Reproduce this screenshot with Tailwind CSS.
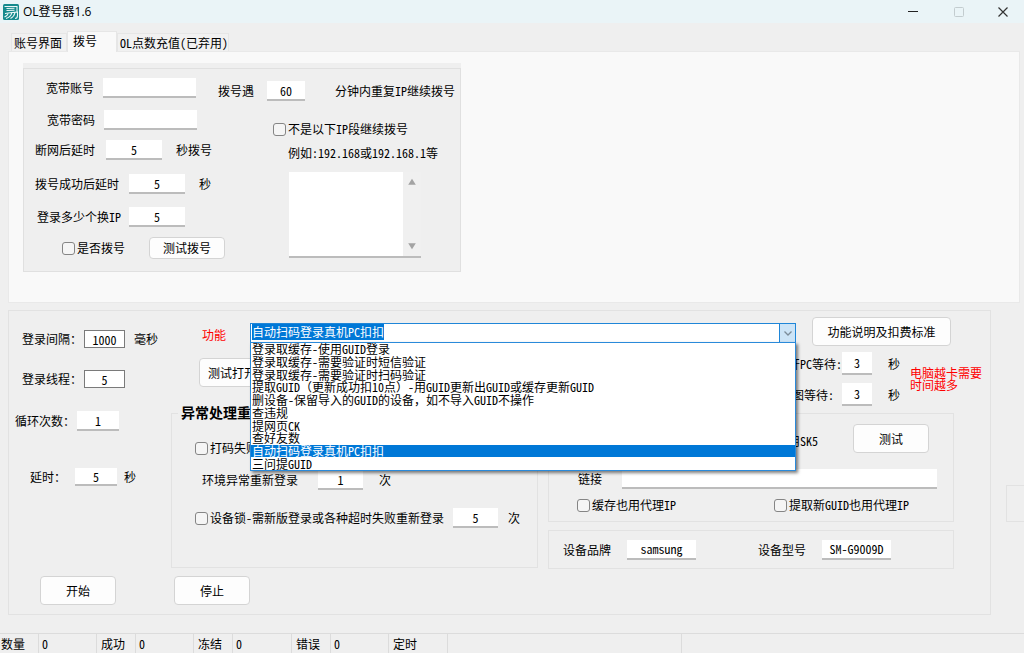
<!DOCTYPE html>
<html lang="zh-CN">
<head>
<meta charset="utf-8">
<title>OL登号器1.6</title>
<script src="https://cdn.jsdelivr.net/npm/@tailwindcss/browser@4"></script>
</head>
<body class="min-h-screen flex flex-col overflow-x-hidden bg-[#efefef] text-black text-[12px] leading-4 whitespace-nowrap font-['Noto_Sans_Mono_CJK_SC','Noto_Sans_CJK_SC',sans-serif]">

<!-- Title bar -->
<header class="h-[23px] flex items-center bg-[#eaf4f7] pl-[3px]">
  <svg class="w-4 h-4" viewBox="0 0 16 16" fill="none" aria-hidden="true">
    <rect width="16" height="16" rx="1.5" fill="#168a8d"/>
    <path d="M1.500 2.500h12.500v5M3.500 4.500l8-.3M3.500 6.500l8-.3M2 9.500C5 9 8 8.300 14.500 8v3.500c0 1.500-1 3-2.500 3M5.500 8.800C5 10.500 3.500 12 1.500 13M9 8.600c-.8 2.500-3 5-6 6M12 8.500c-.5 2.500-2.500 5-4.500 6" stroke="#eaf7f7" stroke-width="1.100"/>
  </svg>
  <h1 class="pl-1 flex-1 font-['Open_Sans','Noto_Sans_CJK_SC',sans-serif]">OL登号器1.6</h1>
  <button type="button" aria-label="最小化" class="w-[46px] h-full grid place-items-center"><svg class="w-3 h-3" viewBox="0 0 12 12"><path d="M1 5.500h10" stroke="#222" stroke-width="1"/></svg></button>
  <button type="button" aria-label="最大化" disabled class="w-[46px] h-full grid place-items-center"><svg class="w-3 h-3" viewBox="0 0 12 12"><rect x="1.500" y="1.500" width="9" height="9" rx="1" fill="none" stroke="#c3cccf"/></svg></button>
  <button type="button" aria-label="关闭" class="w-[42px] h-full grid place-items-center"><svg class="w-3 h-3" viewBox="0 0 12 12"><path d="M1.500 1.500l9 9M10.500 1.500l-9 9" stroke="#333" stroke-width="1.200"/></svg></button>
</header>

<main class="flex-1 flex flex-col pt-2">
  <!-- Tabs -->
  <div role="tablist" class="flex items-end h-5 pl-[11px]">
    <button type="button" role="tab" class="h-[18px] w-14 pl-0.5 text-left border border-b-0 border-[#e6e6e6] bg-[#f1f1f1]">账号界面</button>
    <button type="button" role="tab" aria-selected="true" class="relative z-10 h-[21px] w-[50px] -mb-px pl-[5px] pb-0.5 text-left border border-b-0 border-[#e6e6e6] bg-[#f9f9f9]">拨号</button>
    <button type="button" role="tab" class="h-[18px] w-28 pl-0.5 text-left border border-b-0 border-[#e6e6e6] bg-[#f1f1f1]">OL点数充值(已弃用)</button>
  </div>

  <section role="tabpanel" class="ml-2 mr-1 border border-[#e9e9e9] bg-[#f9f9f9] pt-[11px] pb-[30px] pl-[14px] flex">
    <div class="bg-[#efefef] pt-[5px]">
      <div class="border border-[#e0e0e0] flex w-[438px] h-[204px]">
        <div class="w-[194px] pt-[5px]">
          <div class="h-7 flex items-center pl-[22px]"><label for="acc" class="w-[57px]">宽带账号</label><input id="acc" class="w-[93px] h-5 bg-white border-b-2 border-[#bcbcbc] px-1"></div>
          <div class="h-7 mt-1 flex items-center pl-[23px]"><label for="pwd" class="w-[57px]">宽带密码</label><input id="pwd" class="w-[93px] h-5 bg-white border-b-2 border-[#bcbcbc] px-1"></div>
          <div class="h-7 mt-0.5 flex items-center pl-[11px]"><label for="d1" class="w-[71px]">断网后延时</label><input id="d1" value="5" class="w-14 h-5 bg-white border-b-2 border-[#bcbcbc] text-center"><span class="pl-[14px]">秒拨号</span></div>
          <div class="h-7 mt-1.5 flex items-center pl-[11px]"><label for="d2" class="w-[94px]">拨号成功后延时</label><input id="d2" value="5" class="w-14 h-5 bg-white border-b-2 border-[#bcbcbc] text-center"><span class="pl-[14px]">秒</span></div>
          <div class="h-7 mt-[5px] flex items-center pl-[13px]"><label for="d3" class="w-[92px]">登录多少个换IP</label><input id="d3" value="5" class="w-14 h-5 bg-white border-b-2 border-[#bcbcbc] text-center"></div>
          <div class="h-7 mt-[3px] flex items-center pl-[38px]"><input id="c1" type="checkbox" class="shrink-0 appearance-none w-[13px] h-[13px] rounded-[3px] border border-[#858585] bg-[#f5f5f5] checked:bg-[#0078d7]"><label for="c1" class="shrink-0 pl-0.5 w-[74px]">是否拨号</label><button type="button" class="shrink-0 w-[76px] h-[22px] rounded-[4px] border border-[#d4d4d4] bg-[#fdfdfd]">测试拨号</button></div>
        </div>
        <div class="pt-2">
          <div class="h-7 flex items-center"><label for="ipm" class="w-[49px]">拨号遇</label><input id="ipm" value="60" class="w-[38px] h-5 bg-white border-b-2 border-[#bcbcbc] text-center"><span class="pl-[30px]">分钟内重复IP继续拨号</span></div>
          <div class="h-6 mt-3 flex items-center pl-[55px]"><input id="c2" type="checkbox" class="appearance-none w-[13px] h-[13px] rounded-[3px] border border-[#858585] bg-[#f5f5f5] checked:bg-[#0078d7]"><label for="c2" class="pl-0.5">不是以下IP段继续拨号</label></div>
          <div class="h-6 flex items-center pl-[70px]"><label for="seg">例如:192.168或192.168.1等</label></div>
          <div class="mt-[7px] ml-[71px] w-[132px] h-[86px] flex border-b-2 border-[#bcbcbc] bg-white">
            <textarea id="seg" class="flex-1 min-w-0 resize-none overflow-hidden bg-white"></textarea>
            <div class="w-[18px] flex flex-col justify-between items-center bg-[#f0f0f0] py-1.5">
              <button type="button" aria-label="向上滚动" class="flex"><svg class="w-2 h-2" viewBox="0 0 8 8"><path d="M4 .8L7.800 6.800H.2z" fill="#a3a3a3"/></svg></button>
              <button type="button" aria-label="向下滚动" class="flex"><svg class="w-2 h-2" viewBox="0 0 8 8"><path d="M4 7.200L.2 1.200h7.600z" fill="#a3a3a3"/></svg></button>
            </div>
          </div>
        </div>
      </div>
    </div>
  </section>

  <div class="mt-[7px] ml-2 flex">
    <section class="flex-1 border border-[#e2e2e2] h-[305px] flex flex-col">
      <div class="flex">
        <!-- Timing settings -->
        <div class="w-[162px] pt-[14px]">
          <div class="h-7 flex items-center pl-[13px]"><label for="t1" class="w-[62px]">登录间隔：</label><input id="t1" value="1000" class="w-[41px] h-[18px] bg-white border border-[#7a7a7a] text-center"><span class="pl-[9px]">毫秒</span></div>
          <div class="h-7 mt-3 flex items-center pl-[13px]"><label for="t2" class="w-[62px]">登录线程：</label><input id="t2" value="5" class="w-[41px] h-[18px] bg-white border border-[#7a7a7a] text-center"></div>
          <div class="h-7 mt-[14px] flex items-center pl-[6px]"><label for="t3" class="w-[62px]">循环次数：</label><input id="t3" value="1" class="w-[42px] h-5 bg-white border-b-2 border-[#bcbcbc] text-center"></div>
          <div class="h-7 mt-7 flex items-center pl-[21px]"><label for="t4" class="w-[45px]">延时：</label><input id="t4" value="5" class="w-[42px] h-[18px] bg-white border-b-2 border-[#bcbcbc] text-center"><span class="pl-[7px]">秒</span></div>
        </div>

        <div class="flex-1 pr-9">
          <!-- Function selector -->
          <div class="flex items-start pt-[6px] pl-[31px]">
            <label for="fn" class="w-12 pt-2.5 text-[#ff0000]">功能</label>
            <div class="relative z-20 flex-1 mt-[6px]">
              <div class="flex h-5 border border-[#1f86d8] bg-white">
                <input id="fn" role="combobox" aria-expanded="true" aria-controls="fnlist" value="自动扫码登录真机PC扣扣" class="flex-1 min-w-0 h-4 pl-px outline-none bg-white selection:bg-[#0078d7] selection:text-white">
                <button type="button" aria-label="展开列表" class="w-4 border-l border-[#1f86d8] bg-[#cce4f7] grid place-items-center"><svg class="w-2.5 h-2.5" viewBox="0 0 10 10"><path d="M1.500 3.500L5 7l3.500-3.500" fill="none" stroke="#7c8c99" stroke-width="1.300"/></svg></button>
              </div>
              <ul id="fnlist" role="listbox" aria-label="功能" class="absolute left-0 right-0 top-[19px] h-[129px] flex flex-col border border-[#2a8ada] bg-white shadow-[2px_2px_3px_rgba(0,0,0,0.5)]">
                <li role="option" class="flex-1 flex items-center leading-[10px] pl-px">登录取缓存-使用GUID登录</li>
                <li role="option" class="flex-1 flex items-center leading-[10px] pl-px">登录取缓存-需要验证时短信验证</li>
                <li role="option" class="flex-1 flex items-center leading-[10px] pl-px">登录取缓存-需要验证时扫码验证</li>
                <li role="option" class="flex-1 flex items-center leading-[10px] pl-px">提取GUID（更新成功扣10点）-用GUID更新出GUID或缓存更新GUID</li>
                <li role="option" class="flex-1 flex items-center leading-[10px] pl-px">删设备-保留导入的GUID的设备，如不导入GUID不操作</li>
                <li role="option" class="flex-1 flex items-center leading-[10px] pl-px">查违规</li>
                <li role="option" class="flex-1 flex items-center leading-[10px] pl-px">提网页CK</li>
                <li role="option" class="flex-1 flex items-center leading-[10px] pl-px">查好友数</li>
                <li role="option" aria-selected="true" class="flex-1 flex items-center leading-[10px] pl-px bg-[#0078d7] text-white">自动扫码登录真机PC扣扣</li>
                <li role="option" class="flex-1 flex items-center leading-[10px] pl-px">三问提GUID</li>
              </ul>
            </div>
            <button type="button" class="ml-4 mr-[3px] w-[139px] h-[29px] rounded-[4px] border border-[#d4d4d4] bg-[#fdfdfd]">功能说明及扣费标准</button>
          </div>

          <div class="flex justify-between pl-7 pt-0.5 -mr-7">
            <button type="button" class="mt-[10px] w-[78px] h-[29px] rounded-[4px] border border-[#d4d4d4] bg-[#fdfdfd]">测试打开PC</button>
            <div class="flex items-center">
              <div>
                <div class="h-[31px] flex items-center"><label for="w1" class="w-[72px] text-right">打开PC等待:</label><input id="w1" value="3" class="w-[30px] h-[23px] bg-white border-b-2 border-[#bcbcbc] text-center"><span class="w-[38px] pl-4">秒</span></div>
                <div class="h-[31px] flex items-center"><label for="w2" class="w-[72px] pr-2 text-right">截图等待:</label><input id="w2" value="3" class="w-[30px] h-[23px] bg-white border-b-2 border-[#bcbcbc] text-center"><span class="w-[38px] pl-4">秒</span></div>
              </div>
              <p class="leading-3 text-[#ff0000]">电脑越卡需要<br>时间越多</p>
            </div>
          </div>

          <div class="flex gap-[10px] -mt-1.5">
            <fieldset class="w-[367px] h-[164px] flex flex-col border border-[#e2e2e2] min-w-0">
              <legend class="ml-1.5 px-[3px] h-[18px] text-[14px] leading-4 font-bold">异常处理重新登录</legend>
              <div class="h-7 mt-3 flex items-center pl-[23px]"><input id="c3" type="checkbox" class="appearance-none w-[13px] h-[13px] rounded-[3px] border border-[#858585] bg-[#f5f5f5] checked:bg-[#0078d7]"><label for="c3" class="pl-0.5">打码失败重新登录</label></div>
              <div class="h-7 mt-1 flex items-center pl-[30px]"><label for="n1" class="w-[116px]">环境异常重新登录</label><input id="n1" value="1" class="w-[45px] h-5 bg-white border-b-2 border-[#bcbcbc] text-center"><span class="pl-4">次</span></div>
              <div class="h-7 mt-[10px] flex items-center pl-[23px]"><input id="c4" type="checkbox" class="appearance-none w-[13px] h-[13px] rounded-[3px] border border-[#858585] bg-[#f5f5f5] checked:bg-[#0078d7]"><label for="c4" class="pl-0.5 w-[245px]">设备锁-需新版登录或各种超时失败重新登录</label><input aria-label="设备锁重新登录次数" value="5" class="w-[45px] h-5 bg-white border-b-2 border-[#bcbcbc] text-center"><span class="pl-[10px]">次</span></div>
            </fieldset>

            <div class="flex-1 pt-[9px]">
              <div class="h-[109px] border border-[#e2e2e2] pt-[10px]">
                <div class="flex justify-end items-center pr-6"><span class="pr-[35px] pt-1">使用SK5</span><button type="button" class="w-[76px] h-[29px] rounded-[4px] border border-[#d4d4d4] bg-[#fdfdfd]">测试</button></div>
                <div class="h-7 mt-3 flex items-center pl-[29px] pr-4"><label for="url" class="w-11">链接</label><input id="url" class="flex-1 min-w-0 h-5 bg-white border-b-2 border-[#bcbcbc] px-1"></div>
                <div class="flex justify-between items-center pt-1 pl-7 pr-[44px]">
                  <div class="flex items-center"><input id="c5" type="checkbox" class="appearance-none w-[13px] h-[13px] rounded-[3px] border border-[#858585] bg-[#f5f5f5] checked:bg-[#0078d7]"><label for="c5" class="pl-0.5">缓存也用代理IP</label></div>
                  <div class="flex items-center"><input id="c6" type="checkbox" class="appearance-none w-[13px] h-[13px] rounded-[3px] border border-[#858585] bg-[#f5f5f5] checked:bg-[#0078d7]"><label for="c6" class="pl-0.5">提取新GUID也用代理IP</label></div>
                </div>
              </div>
              <div class="h-[39px] mt-2 border border-[#e2e2e2] flex items-center pl-[14px]">
                <label for="brand" class="w-16">设备品牌</label><input id="brand" value="samsung" class="w-[69px] h-5 bg-white border-b-2 border-[#bcbcbc] text-center">
                <label for="model" class="w-16 ml-[62px]">设备型号</label><input id="model" value="SM-G9009D" class="w-[69px] h-5 bg-white border-b-2 border-[#bcbcbc] text-center">
              </div>
            </div>
          </div>
        </div>
      </div>

      <div class="flex gap-[58px] pl-[31px] pt-[7px]">
        <button type="button" class="w-[76px] h-[29px] rounded-[4px] border border-[#d4d4d4] bg-[#fdfdfd]">开始</button>
        <button type="button" class="w-[76px] h-[29px] rounded-[4px] border border-[#d4d4d4] bg-[#fdfdfd]">停止</button>
      </div>
    </section>
    <div class="w-[18px] ml-[15px] mt-[175px] h-[37px] border border-r-0 border-[#e2e2e2]"></div>
  </div>
</main>

<!-- Status bar -->
<footer class="h-5 flex items-center border-t border-[#dcdcdc] leading-[19px]">
  <span class="w-[39px] pl-px border-r border-[#dcdcdc]">数量</span>
  <span class="w-[58px] pl-[3px] border-r border-[#dcdcdc]">0</span>
  <span class="w-[39px] pl-1 border-r border-[#dcdcdc]">成功</span>
  <span class="w-[58px] pl-[3px] border-r border-[#dcdcdc]">0</span>
  <span class="w-[39px] pl-1 border-r border-[#dcdcdc]">冻结</span>
  <span class="w-[59px] pl-[3px] border-r border-[#dcdcdc]">0</span>
  <span class="w-[39px] pl-1 border-r border-[#dcdcdc]">错误</span>
  <span class="w-[58px] pl-[3px] border-r border-[#dcdcdc]">0</span>
  <span class="w-[59px] pl-1 border-r border-[#dcdcdc]">定时</span>
  <span class="w-[234px] h-full border-r border-[#dcdcdc]"></span>
</footer>
<script>
  const fn = document.getElementById('fn');
  fn.focus();
  fn.select();
</script>
</body>
</html>
